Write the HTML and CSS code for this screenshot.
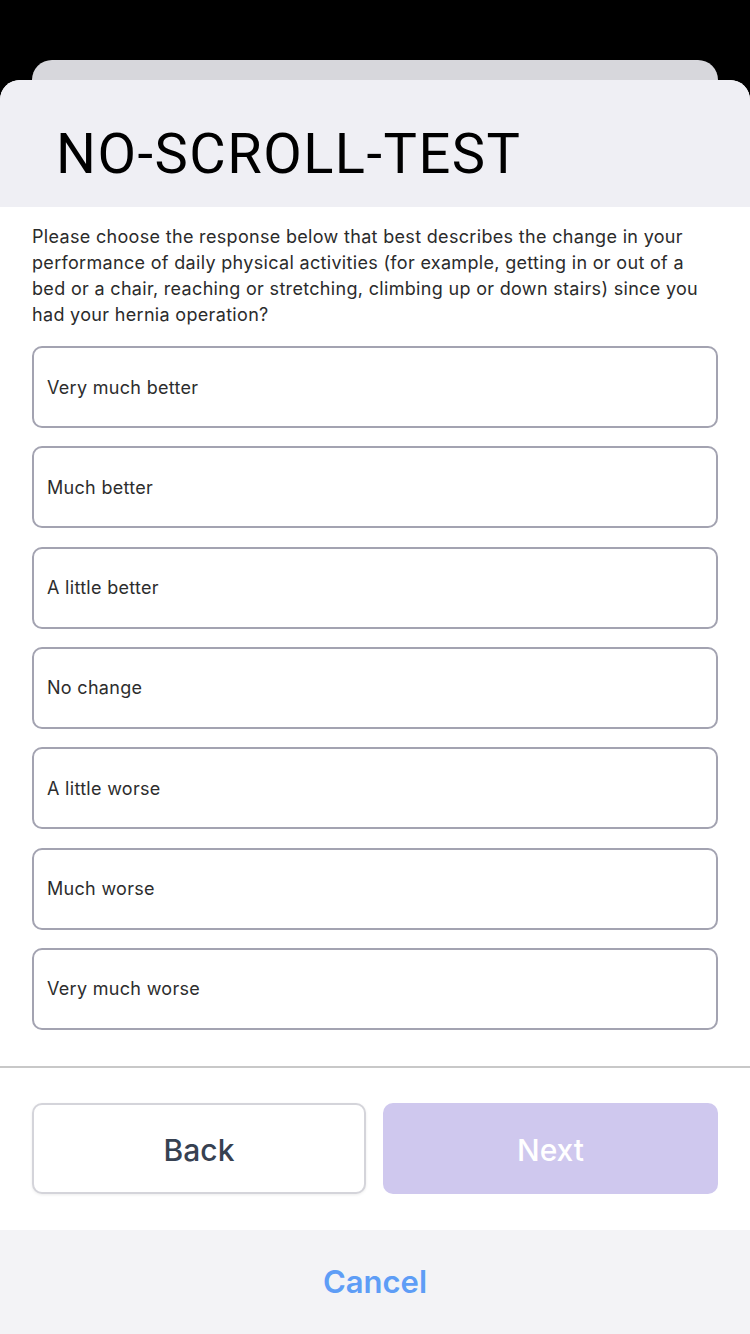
FILE: index.html
```html
<!DOCTYPE html>
<html lang="en">
<head>
<meta charset="utf-8">
<title>NO-SCROLL-TEST</title>
<link rel="stylesheet" href="styles.css">
</head>
<body>
<div class="screen">
  <div class="backcard"></div>
  <div class="sheet">
    <header class="header">
      <h1 class="title">NO-SCROLL-TEST</h1>
    </header>
    <main class="content">
      <p class="question">Please choose the response below that best describes the change in your performance of daily physical activities (for example, getting in or out of a bed or a chair, reaching or stretching, climbing up or down stairs) since you had your hernia operation?</p>
      <div class="options">
        <div class="option">Very much better</div>
        <div class="option">Much better</div>
        <div class="option">A little better</div>
        <div class="option">No change</div>
        <div class="option">A little worse</div>
        <div class="option">Much worse</div>
        <div class="option">Very much worse</div>
      </div>
    </main>
    <div class="divider"></div>
    <div class="actions">
      <button class="btn btn-back">Back</button>
      <button class="btn btn-next">Next</button>
    </div>
    <div class="cancel-bar">
      <span class="cancel">Cancel</span>
    </div>
  </div>
</div>
</body>
</html>
```
FILE: styles.css
```css
html, body {
  margin: 0;
  padding: 0;
  background: #000;
}
.screen {
  width: 750px;
  height: 1334px;
  padding-top: 60px;
  box-sizing: border-box;
  display: flex;
  flex-direction: column;
  overflow: hidden;
}
.backcard {
  height: 20px;
  margin: 0 32px;
  background: #d7d7dc;
  border-radius: 20px 20px 0 0;
  flex: none;
}
.sheet {
  flex: 1;
  background: #fff;
  border-radius: 20px 20px 0 0;
  overflow: hidden;
  display: flex;
  flex-direction: column;
}
.header {
  height: 127px;
  box-sizing: border-box;
  background: #efeff4;
  padding-left: 56px;
  padding-top: 20px;
  display: flex;
  align-items: center;
  flex: none;
}
.title {
  margin: 0;
  font-family: Roboto, "Liberation Sans", sans-serif;
  font-weight: 400;
  font-size: 56px;
  letter-spacing: 1.5px;
  color: #000;
  line-height: 1;
}
.content {
  padding: 17px 32px 0;
}
.question {
  margin: 0;
  font-family: Inter, "Noto Sans", sans-serif;
  font-size: 18px;
  line-height: 26px;
  color: #2b2b2b;
  letter-spacing: 0.32px;
}
.options {
  margin-top: 18px;
  display: flex;
  flex-direction: column;
  gap: 18.33px;
}
.option {
  height: 82px;
  box-sizing: border-box;
  border: 2px solid #a3a3b1;
  border-radius: 10px;
  padding-left: 13px;
  display: flex;
  align-items: center;
  font-family: Inter, "Noto Sans", sans-serif;
  font-size: 18px;
  color: #2d2d2d;
  letter-spacing: 0.3px;
}
.divider {
  margin-top: 36px;
  height: 2px;
  background: #c8c8c8;
  flex: none;
}
.actions {
  display: grid;
  grid-template-columns: 334px 335px;
  column-gap: 17px;
  padding: 35px 32px 36px;
}
.btn {
  box-sizing: border-box;
  width: 100%;
  height: 91px;
  border-radius: 10px;
  font-family: Inter, "Noto Sans", sans-serif;
  font-size: 30px;
  font-weight: 500;
  margin: 0;
  padding: 4px 0 0;
}
.btn-back {
  background: #fff;
  border: 2px solid #d4d4da;
  color: #374151;
  box-shadow: 0 1px 3px rgba(0,0,0,0.08);
}
.btn-next {
  background: #cfc8ee;
  border: none;
  color: #fff;
}
.cancel-bar {
  flex: 1;
  background: #f3f3f6;
  display: flex;
  align-items: center;
  justify-content: center;
}
.cancel {
  font-family: Inter, "Noto Sans", sans-serif;
  font-size: 31px;
  font-weight: 600;
  color: #5e9df6;
}
```
